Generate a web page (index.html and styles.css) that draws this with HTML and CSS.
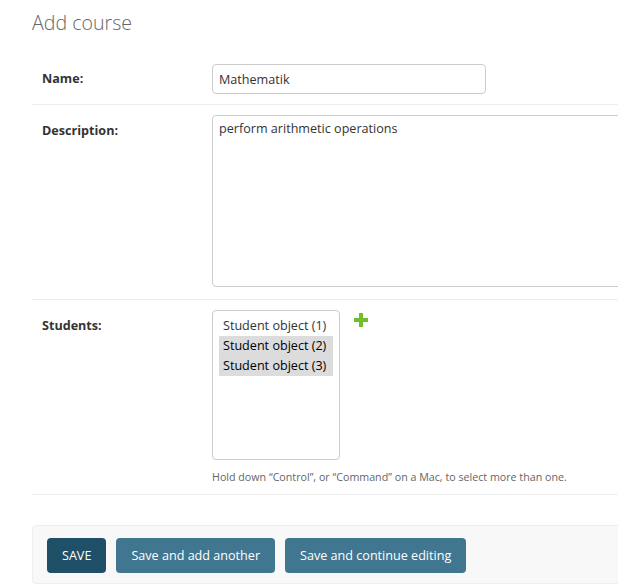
FILE: index.html
```html
<!DOCTYPE html>
<html>
<head>
<meta charset="utf-8">
<link rel="stylesheet" href="styles.css">
</head>
<body>
<div class="page">
  <h1 class="title">Add course</h1>
  <form class="form">
    <div class="row row-name">
      <label class="label">Name:</label>
      <div class="field"><input class="text-input" type="text" value="Mathematik"></div>
    </div>
    <div class="row row-desc">
      <label class="label">Description:</label>
      <div class="field"><textarea class="textarea">perform arithmetic operations</textarea></div>
    </div>
    <div class="row row-students">
      <label class="label">Students:</label>
      <div class="field">
        <div class="select-wrap">
          <div class="select">
            <div class="option">Student object (1)</div>
            <div class="option selected">Student object (2)</div>
            <div class="option selected">Student object (3)</div>
          </div>
          <a class="add-link" href="#" aria-label="Add another">
            <svg width="14" height="14" viewBox="0 0 14 14"><path d="M5 0h4v5h5v4H9v5H5V9H0V5h5z" fill="#70bf2b"/></svg>
          </a>
        </div>
        <div class="help">Hold down “Control”, or “Command” on a Mac, to select more than one.</div>
      </div>
    </div>
    <div class="submit-row">
      <button type="button" class="btn btn-default">SAVE</button>
      <button type="button" class="btn">Save and add another</button>
      <button type="button" class="btn">Save and continue editing</button>
    </div>
  </form>
</div>
</body>
</html>
```
FILE: styles.css
```css
html, body {
  margin: 0;
  padding: 0;
  background: #fff;
}
body {
  font-family: "Open Sans", "DejaVu Sans", sans-serif;
  color: #333;
  overflow: hidden;
}
.page {
  padding: 0 0 0 32px;
  width: 700px;
}
.title {
  margin: 0;
  padding: 10px 0 0;
  height: 54px;
  box-sizing: border-box;
  font-size: 19.6px;
  font-weight: 300;
  color: #666;
  line-height: 26px;
}
.form {
  width: 620px;
}
.row {
  display: flex;
  padding: 10px;
  border-bottom: 1px solid #eee;
}
.row-desc {
  padding-bottom: 12px;
}
.label {
  width: 170px;
  flex: none;
  font-size: 12.6px;
  font-weight: 700;
  color: #333;
  line-height: 16px;
  padding-top: 7px;
}
.row-desc .label,
.row-students .label { padding-top: 8px; }
.field {
  display: flex;
  flex-direction: column;
}
.text-input {
  box-sizing: border-box;
  width: 274px;
  height: 30px;
  border: 1px solid #ccc;
  border-radius: 4px;
  padding: 5px 6px;
  font-family: inherit;
  font-size: 12.6px;
  color: #333;
  margin: 0;
}
.textarea {
  box-sizing: border-box;
  width: 610px;
  height: 172px;
  border: 1px solid #ccc;
  border-radius: 4px;
  padding: 4px 6px;
  font-family: inherit;
  font-size: 12.6px;
  color: #333;
  resize: none;
  margin: 0;
  display: block;
}
.select-wrap {
  display: flex;
  align-items: flex-start;
}
.select {
  box-sizing: border-box;
  width: 128px;
  height: 150px;
  border: 1px solid #ccc;
  border-radius: 4px;
  padding: 5px 6px;
  font-size: 12.6px;
  color: #333;
}
.option {
  height: 20px;
  line-height: 20px;
  padding: 0 4px;
  white-space: nowrap;
  color: #333;
}
.option.selected {
  background: #dcdcdc;
  color: #000;
}
.add-link {
  display: block;
  margin: 3px 0 0 14px;
  line-height: 0;
}
.help {
  margin-top: 10px;
  font-size: 10.7px;
  line-height: 14px;
  color: #666;
  white-space: nowrap;
}
.submit-row {
  margin-top: 30px;
  display: flex;
  gap: 10px;
  padding: 12px 14px 10px;
  background: #f8f8f8;
  border: 1px solid #eee;
  border-radius: 4px;
}
.btn {
  height: 35px;
  padding: 0 15px;
  border: none;
  border-radius: 4px;
  background: #417690;
  color: #fff;
  font-family: inherit;
  font-size: 12.6px;
  margin: 0;
}
.btn-default {
  background: #205067;
}
```
